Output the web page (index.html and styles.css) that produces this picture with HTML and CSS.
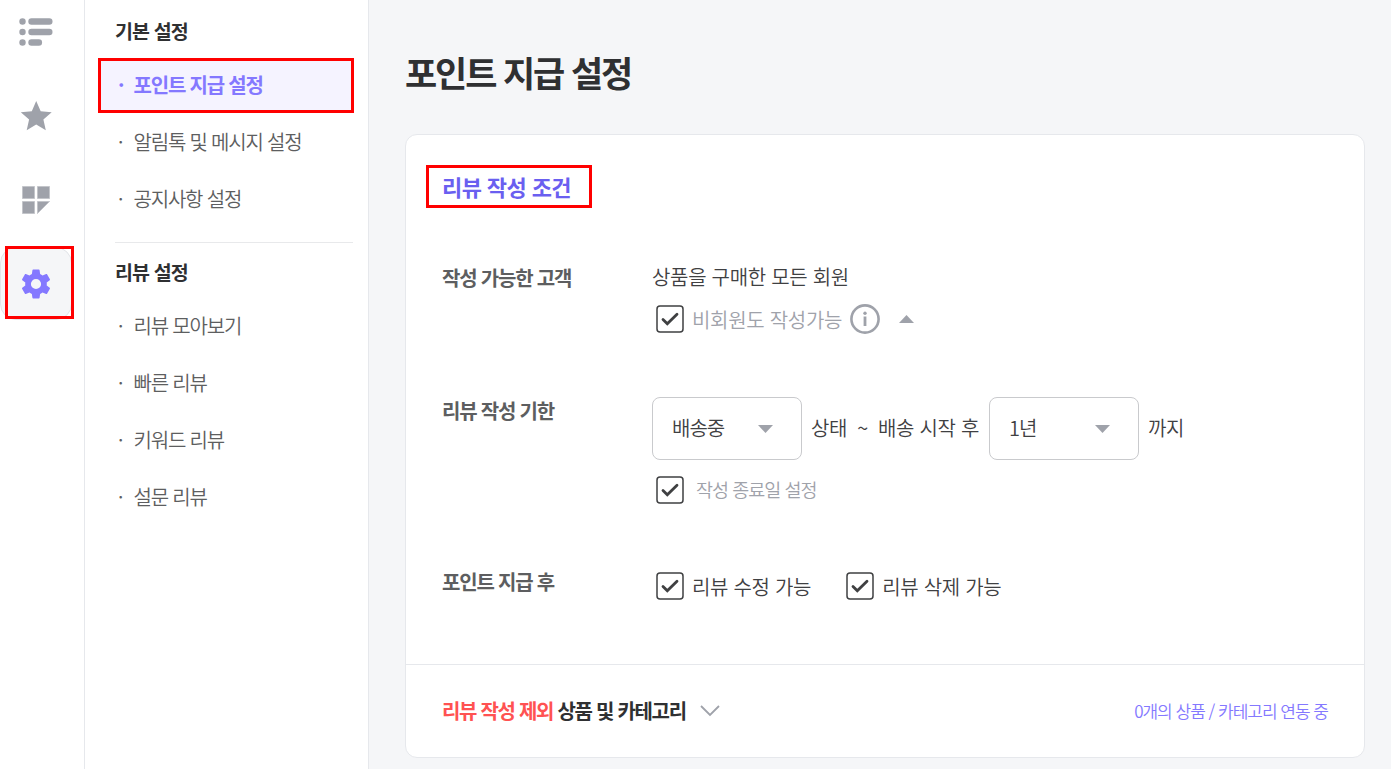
FILE: index.html
```html
<!DOCTYPE html>
<html lang="ko">
<head>
    <meta charset="UTF-8">
    <meta name="viewport" content="width=device-width, initial-scale=1.0">
    <title>포인트 지급 설정</title>
    <link rel="stylesheet" href="styles.css">
</head>

<body>
    <!-- shared icons -->
    <svg class="sprite" width="0" height="0">
        <symbol id="check" viewBox="0 0 28 28">
            <rect x="1" y="1" width="26" height="26" rx="3" fill="#fff" stroke="#3f4042" stroke-width="1.5"/>
            <path d="M7 14.500l4.300 4.300L21 9.300" fill="none" stroke="#3f4042" stroke-width="2.800" stroke-linecap="round"/>
        </symbol>
        <symbol id="arrow" viewBox="0 0 15 8">
            <path d="M0 0h15L7.500 8z" fill="#9fa2aa"/>
        </symbol>
    </svg>

    <div class="container">
        <nav class="rail">
            <a class="rail_item">
                <svg width="36" height="30" viewBox="0 0 36 30" fill="#9fa2aa">
                    <circle cx="4.500" cy="4.500" r="3.200"/><rect x="10.300" y="1.300" width="24.200" height="6.400" rx="3.200"/>
                    <circle cx="4.500" cy="15" r="3.200"/><rect x="10.300" y="11.800" width="24.200" height="6.400" rx="3.200"/>
                    <circle cx="4.500" cy="25.500" r="3.200"/><rect x="10.300" y="22.300" width="13.800" height="6.400" rx="3.200"/>
                </svg>
            </a>
            <a class="rail_item">
                <svg width="32" height="32" viewBox="0 0 32 32">
                    <path d="M16.200 1l4.500 10.200 11 1-8.300 7.300 2.400 10.800-9.600-5.700-9.500 5.700 2.400-10.800L.8 12.200l11-1z" fill="#9fa2aa"/>
                </svg>
            </a>
            <a class="rail_item">
                <svg width="28" height="28" viewBox="0 0 28 28" fill="#9fa2aa" stroke="#c3c5ca">
                    <path d="M.5.5h12v12H.5zM15.500.5h12v12h-12zM.5 15.500h12v12H.5zM15.500 15.500h12l-12 12z"/>
                </svg>
            </a>
            <a class="rail_item active">
                <svg width="36" height="36" viewBox="0 0 24 24">
                    <path fill="#8478ff" d="M19.140 12.940c.04-.3.06-.61.06-.94 0-.32-.02-.64-.07-.94l2.030-1.580c.18-.14.23-.41.12-.61l-1.920-3.320c-.12-.22-.37-.29-.59-.22l-2.390.96c-.5-.38-1.030-.7-1.620-.94l-.36-2.540c-.04-.24-.24-.41-.48-.41h-3.840c-.24 0-.43.17-.47.41l-.36 2.540c-.59.24-1.130.57-1.620.94l-2.390-.96c-.22-.08-.47 0-.59.22L2.740 8.870c-.12.21-.08.47.12.61l2.030 1.580c-.05.3-.09.63-.09.94s.02.64.07.94l-2.030 1.580c-.18.14-.23.41-.12.61l1.920 3.320c.12.22.37.29.59.22l2.390-.96c.5.38 1.030.7 1.620.94l.36 2.540c.05.24.24.41.48.41h3.840c.24 0 .44-.17.47-.41l.36-2.540c.59-.24 1.130-.56 1.620-.94l2.390.96c.22.08.47 0 .59-.22l1.920-3.320c.12-.22.07-.47-.12-.61l-2.010-1.580zM12 15.400a3.400 3.400 0 1 1 0-6.800 3.400 3.400 0 0 1 0 6.800z"/>
                </svg>
            </a>
        </nav>

        <aside class="side">
            <h2>기본 설정</h2>
            <ul>
                <li class="on">포인트 지급 설정</li>
                <li>알림톡 및 메시지 설정</li>
                <li>공지사항 설정</li>
            </ul>
            <hr>
            <h2>리뷰 설정</h2>
            <ul>
                <li>리뷰 모아보기</li>
                <li>빠른 리뷰</li>
                <li>키워드 리뷰</li>
                <li>설문 리뷰</li>
            </ul>
        </aside>

        <main>
            <h1>포인트 지급 설정</h1>
            <section class="card">
                <div class="card_body">
                    <h3>리뷰 작성 조건</h3>

                    <div class="row row_customer">
                        <div class="label">작성 가능한 고객</div>
                        <div class="field">
                            <div class="text">상품을 구매한 모든 회원</div>
                            <div class="check_line">
                                <svg class="check"><use href="#check"/></svg>
                                <span class="gray">비회원도 작성가능</span>
                                <svg class="info" width="30" height="30" viewBox="0 0 30 30">
                                    <circle cx="15" cy="15" r="13.600" fill="none" stroke="#9fa2aa" stroke-width="2.600"/>
                                    <circle cx="15" cy="9.300" r="1.700" fill="#9fa2aa"/>
                                    <path d="M15 12.500v9.500" stroke="#9fa2aa" stroke-width="2.800"/>
                                </svg>
                                <svg class="arrow up"><use href="#arrow"/></svg>
                            </div>
                        </div>
                    </div>

                    <div class="row row_period">
                        <div class="label">리뷰 작성 기한</div>
                        <div class="field">
                            <div class="period">
                                <div class="select"><span>배송중</span><svg class="arrow"><use href="#arrow"/></svg></div>
                                <span class="status">상태</span>
                                <span class="tilde">~</span>
                                <span class="after">배송 시작 후</span>
                                <div class="select"><span>1년</span><svg class="arrow"><use href="#arrow"/></svg></div>
                                <span class="until">까지</span>
                            </div>
                            <div class="check_line">
                                <svg class="check"><use href="#check"/></svg>
                                <span class="gray end_date">작성 종료일 설정</span>
                            </div>
                        </div>
                    </div>

                    <div class="row row_after">
                        <div class="label">포인트 지급 후</div>
                        <div class="field">
                            <div class="check_line">
                                <svg class="check"><use href="#check"/></svg>
                                <span class="option">리뷰 수정 가능</span>
                                <svg class="check"><use href="#check"/></svg>
                                <span class="option">리뷰 삭제 가능</span>
                            </div>
                        </div>
                    </div>
                </div>

                <div class="card_foot">
                    <div class="exclude"><em>리뷰 작성 제외</em> 상품 및 카테고리</div>
                    <svg class="chevron" width="20" height="12" viewBox="0 0 20 12">
                        <path d="M1 1l9 9 9-9" fill="none" stroke="#9fa2aa" stroke-width="1.800"/>
                    </svg>
                    <div class="linked">0개의 상품 / 카테고리 연동 중</div>
                </div>
            </section>
        </main>
    </div>
</body>
</html>
```
FILE: styles.css
```css
*, *::before, *::after{
    box-sizing: border-box;
}
body{
    margin:0;
    background-color: #f5f6f8;
    font-family: "Noto Sans CJK KR", sans-serif;
    font-size: 20px;
    font-weight: 350;
    color: #3f4042;
    overflow: hidden;
}
h1, h2, h3, ul{
    margin:0;
    padding:0;
}
h1, h2, .exclude{
    color: #2f3032;
}
.sprite{
    position: absolute;
}
.container{
    display: flex;
    height: 769px;
}

/* icon rail */
.rail{
    width: 85px;
    flex: none;
    background-color: white;
    border-right: 1px solid #e6e8ec;
    padding-top: 4px;
}
.rail_item{
    display: flex;
    justify-content: center;
    align-items: center;
    width: 72px;
    height: 56px;
    margin-bottom: 28px;
}
.rail_item svg{
    display: block;
}
.rail_item.active{
    position: relative;
    height: 73px;
    margin-top: -9px;
    background-color: #f5f6f8;
    border: 1px solid #e2e4e8;
    border-radius: 16px;
}
.rail_item.active::after{
    content: "";
    position: absolute;
    left: 4px;
    top: -2px;
    width: 69px;
    height: 73px;
    border: 3px solid #ff0000;
}

/* side menu */
.side{
    width: 284px;
    flex: none;
    background-color: white;
    border-right: 1px solid #e6e8ec;
}
.side h2{
    height: 57px;
    padding-left: 30px;
    font-size: 19.500px;
    font-weight: 700;
    line-height: 62px;
    letter-spacing: -0.9px;
}
.side hr + h2{
    line-height: 60px;
}
.side ul{
    list-style: none;
}
.side li{
    height: 57px;
    padding-left: 33px;
    line-height: 56px;
    letter-spacing: -1.2px;
    color: #5d5e60;
}
.side hr ~ ul li{
    line-height: 54px;
}
.side li::before{
    content: "·";
    display: inline-block;
    width: 15.500px;
}
.side li.on{
    width: 256px;
    height: 55px;
    margin: 1px 0 1px 13px;
    padding-left: 17px;
    line-height: 48px;
    border: 3px solid #ff0000;
    background-color: #f5f3ff;
    color: #8478ff;
    font-weight: 700;
}
.side hr{
    width: 238px;
    height: 1px;
    margin: 14px 0 -1px 30px;
    border: 0;
    background-color: #e8e9eb;
}

/* content */
main{
    flex: 1;
    padding: 0 26px 0 36px;
}
h1{
    height: 134px;
    line-height: 144px;
    font-size: 35px;
    font-weight: 700;
    letter-spacing: -2.1px;
}
.card{
    width: 960px;
    height: 624px;
    background-color: white;
    border: 1px solid #e6e8ec;
    border-radius: 12px;
}
.card_body{
    height: 529px;
    padding: 30px 36px 0;
}
h3{
    width: 166px;
    height: 43px;
    margin-left: -16px;
    padding-left: 13px;
    border: 3px solid #ff0000;
    color: #6a5ff0;
    font-size: 22px;
    font-weight: 700;
    line-height: 36px;
    letter-spacing: -0.6px;
}
.row{
    display: flex;
}
.row_customer{
    height: 134px;
    margin-top: 54px;
}
.row_period{
    height: 171px;
}
.label{
    width: 210px;
    height: 30px;
    line-height: 30px;
    font-weight: 700;
    letter-spacing: -1.2px;
    color: #5d5e60;
}
.row_customer .label{
    line-height: 32px;
}
.text{
    height: 30px;
    line-height: 29px;
    letter-spacing: -0.3px;
}
.check_line{
    display: flex;
    align-items: center;
    height: 30px;
    padding-left: 4px;
}
.check{
    width: 28px;
    height: 28px;
    margin-right: 8px;
}
.gray{
    color: #9fa2aa;
    letter-spacing: -0.3px;
}
.row_customer .check_line{
    margin-top: 12px;
}
.info{
    margin-left: 8px;
}
.arrow{
    width: 15px;
    height: 8px;
}
.up{
    margin-left: 19px;
    transform: rotate(180deg);
}
.period{
    display: flex;
    align-items: center;
    height: 63px;
    letter-spacing: -0.3px;
}
.period span{
    padding-bottom: 2px;
}
.select{
    display: flex;
    justify-content: space-between;
    align-items: center;
    width: 150px;
    height: 63px;
    padding: 0 28px 0 19px;
    border: 1px solid #c9cacd;
    border-radius: 8px;
    letter-spacing: -1px;
}
.status{
    margin-left: 9px;
}
.tilde{
    margin: 0 10px 0 10px;
}
.after{
    margin-right: 10px;
}
.until{
    margin-left: 9px;
}
.row_period .check_line{
    margin-top: 15px;
}
.end_date{
    height: 30px;
    margin-left: 4px;
    font-size: 18.500px;
    line-height: 28px;
    letter-spacing: -1px;
}
.row_period .field{
    margin-top: 1px;
}
.row_after .check_line{
    margin-top: 4px;
}
.option{
    letter-spacing: -0.3px;
    margin-right: 35px;
}

/* excluded products */
.card_foot{
    display: flex;
    align-items: center;
    height: 93px;
    padding: 0 36px 2px;
    border-top: 1px solid #e6e8ec;
}
.exclude{
    font-weight: 700;
    letter-spacing: -1.3px;
}
.exclude em{
    font-style: normal;
    color: #ff5252;
}
.chevron{
    margin: 2px 0 0 14px;
}
.linked{
    margin-left: auto;
    font-size: 17px;
    letter-spacing: -1px;
    color: #8478ff;
}
```
